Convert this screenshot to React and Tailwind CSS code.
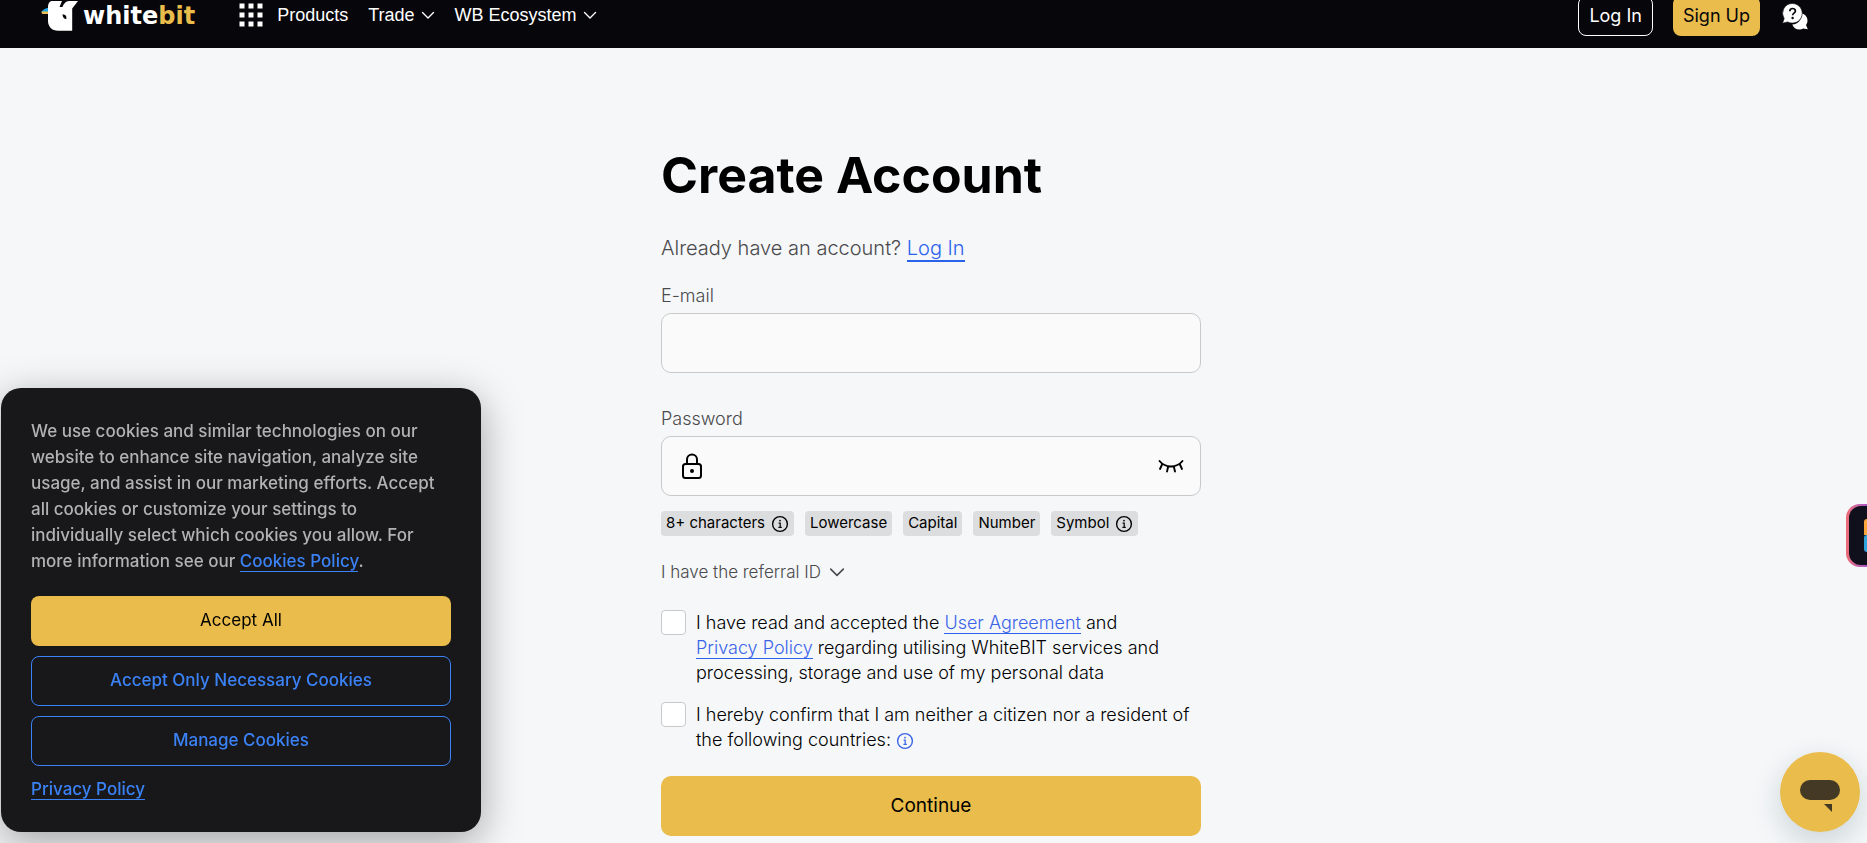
import { useState } from 'react';

const NAV_ITEMS = ['Trade', 'WB Ecosystem'];

const PASSWORD_RULES = [
  { label: '8+ characters', info: true },
  { label: 'Lowercase' },
  { label: 'Capital' },
  { label: 'Number' },
  { label: 'Symbol', info: true }
];

function ChevronIcon({ className }) {
  return (
    <svg className={className} viewBox="0 0 14 14" fill="none" stroke="currentColor" strokeWidth="1.4" strokeLinecap="round" strokeLinejoin="round">
      <path d="M1.500 4.500l5.500 5.500 5.500-5.500" />
    </svg>
  );
}

function InfoIcon({ className }) {
  return (
    <svg className={className} viewBox="0 0 18 18" fill="none" stroke="currentColor" strokeWidth="1.4">
      <circle cx="9" cy="9" r="7.4" />
      <path d="M7.600 8.200h1.600v4M7.400 12.400h3.400" strokeWidth="1.200" />
      <circle cx="9" cy="5.600" r="0.900" fill="currentColor" stroke="none" />
    </svg>
  );
}

function Logo() {
  return (
    <a href="#home" className="flex items-center gap-1" aria-label="whitebit">
      <svg className="h-[30px] w-[38px]" viewBox="0 0 38 30">
        <path d="M8 6.500C4 7 1.500 9 0.500 11H8z" fill="#1fa2e8" />
        <path d="M0.500 10.500H8V13H1.800C1 13 0.400 12 0.500 10.500z" fill="#ebbd4c" />
        <path
          d="M10.500 0H21L18.500 6H21.500C22.500 3 25 0 28 0H37L31.200 7.500V29.800H17C11 29.800 7 25.500 7 20V6C7 3 8 0.800 10.500 0z"
          fill="#fff"
        />
        <path d="M21.500 13.200l2 .6c1.200.4 1.800 1.200 1.800 2.400v2c-2.200-.4-3.800-2-3.800-5z" fill="#07060b" />
      </svg>
      <span className="font-['DejaVu_Sans',sans-serif] text-2xl leading-8 font-bold text-white">
        white<span className="text-[#e9bc4b]">bit</span>
      </span>
    </a>
  );
}

function Header() {
  return (
    <header className="-mt-4 flex h-16 items-center justify-between bg-[#07060b] pr-[58px] pl-[41px] text-white">
      <div className="flex items-center">
        <Logo />
        <nav className="ml-11 flex items-center gap-5 pb-0.5 font-['Liberation_Sans',Arial,sans-serif] text-lg leading-8">
          <button type="button" className="flex items-center gap-3.5">
            <svg className="size-6" viewBox="0 0 24 24" fill="currentColor">
              {[0.5, 9.5, 18.5].map((y) =>
                [0.5, 9.5, 18.5].map((x) => <rect key={`${x}-${y}`} x={x} y={y} width="5" height="5" />)
              )}
            </svg>
            Products
          </button>
          {NAV_ITEMS.map((item) => (
            <button key={item} type="button" className="flex items-center gap-1.5">
              {item}
              <ChevronIcon className="size-3.5" />
            </button>
          ))}
        </nav>
      </div>

      <div className="flex items-center gap-5 text-lg">
        <a href="#login" className="flex h-10 items-center rounded-lg border border-white px-2.5">
          Log In
        </a>
        <a href="#signup" className="flex h-10 items-center rounded-lg bg-[#e9bc4b] px-2.5 text-[#07060b]">
          Sign Up
        </a>
        <button type="button" aria-label="Help">
          <svg className="ml-0.5 size-[27px]" viewBox="0 0 27 27">
            <path d="M20 10.500c3.500 1 5.500 4 5.500 7 0 1.800-.6 3.200-1.500 4.500l1.800 4.200-4.600-.6c-1 .6-2.200.9-3.700.9-3.500 0-6.300-2-7.200-5 5.200 0 9.700-4.600 9.700-11z" fill="#fff" />
            <path d="M10.500 0.500a9.800 9.800 0 1 1-4.800 18.400L0.500 20.200l1.700-4.600A9.800 9.800 0 0 1 10.500 0.500z" fill="#fff" stroke="#07060b" strokeWidth="0.600" />
            <path d="M7.800 8.200c0-3.700 5.600-3.500 5.600-.2 0 2.100-2.800 2.200-2.800 4.300" fill="none" stroke="#07060b" strokeWidth="1.700" />
            <circle cx="10.600" cy="15" r="1.200" fill="#07060b" />
          </svg>
        </button>
      </div>
    </header>
  );
}

function FormLink({ href, children }) {
  return (
    <a href={href} className="border-b border-[#2b62eb] text-[#3a63e8]">
      {children}
    </a>
  );
}

function Agreement({ id, children }) {
  const [checked, setChecked] = useState(false);

  return (
    <div className="flex gap-2.5">
      <input
        id={id}
        type="checkbox"
        checked={checked}
        onChange={(e) => setChecked(e.target.checked)}
        className="size-[25px] shrink-0 appearance-none rounded border border-[#c8c9cb] bg-white checked:bg-[#e9bc4b]"
      />
      <label htmlFor={id} className="text-lg leading-[25px] font-light text-black">
        {children}
      </label>
    </div>
  );
}

function SignUpForm() {
  const [showPassword, setShowPassword] = useState(false);

  return (
    <form className="w-full max-w-[540px]" onSubmit={(e) => e.preventDefault()}>
      <h1 className="text-[50px] leading-[60px] font-bold text-black">Create Account</h1>
      <p className="mt-7 text-xl leading-[30px] font-light text-[#4a4a4c]">
        Already have an account?{' '}
        <a href="#login" className="border-b-2 border-[#2b62eb] text-[#2b62eb]">
          Log In
        </a>
      </p>

      {/* E-mail */}
      <label htmlFor="email" className="mt-[21px] block text-lg leading-6 font-light text-[#4a4a4c]">
        E-mail
      </label>
      <input
        id="email"
        type="email"
        className="mt-[5px] block h-[60px] w-full rounded-[10px] border border-[#c8c9cb] bg-[#fafafa] px-5"
      />

      {/* Password */}
      <label htmlFor="password" className="mt-[34px] block text-lg leading-6 font-light text-[#4a4a4c]">
        Password
      </label>
      <div className="mt-[5px] flex h-[60px] items-center gap-3 rounded-[10px] border border-[#c8c9cb] bg-[#fafafa] pr-4 pl-[18px]">
        <svg className="h-[26px] w-6 shrink-0" viewBox="0 0 24 26" fill="none" stroke="#000" strokeWidth="2">
          <rect x="3" y="11" width="18" height="14" rx="2.500" />
          <path d="M7 11V6.500a5 5 0 0 1 10 0V11" />
          <circle cx="12" cy="18" r="2" fill="#000" stroke="none" />
        </svg>
        <input
          id="password"
          type={showPassword ? 'text' : 'password'}
          className="h-full min-w-0 flex-1 bg-transparent outline-none"
        />
        <button type="button" aria-label="Toggle password visibility" onClick={() => setShowPassword(!showPassword)}>
          <svg className="h-4 w-[26px]" viewBox="0 0 26 16" fill="none" stroke="#000" strokeWidth="1.900" strokeLinecap="round">
            <path d="M1.500 3c6 7.300 17 7.300 23 0M4.300 6L2 11M10.200 8.500L9 13.500M15.800 8.500l1.200 5M21.700 6L24 11" />
          </svg>
        </button>
      </div>

      <ul className="mt-[15px] flex gap-[11px]">
        {PASSWORD_RULES.map((rule) => (
          <li key={rule.label} className="flex h-[25px] items-center gap-1.5 rounded bg-[#dcddde] px-[5px] text-[15px] text-black">
            {rule.label}
            {rule.info && <InfoIcon className="size-[18px]" />}
          </li>
        ))}
      </ul>

      <button type="button" className="mt-6 flex items-center gap-2 text-[17px] leading-6 font-light text-[#4a4a4c]">
        I have the referral ID
        <ChevronIcon className="size-4" />
      </button>

      <div className="mt-[26px] flex flex-col gap-[17px]">
        <Agreement id="terms">
          I have read and accepted the <FormLink href="#agreement">User Agreement</FormLink> and
          <br />
          <FormLink href="#privacy">Privacy Policy</FormLink> regarding utilising WhiteBIT services and processing,
          storage and use of my personal data
        </Agreement>
        <Agreement id="residency">
          I hereby confirm that I am neither a citizen nor a resident of the following countries:{' '}
          <InfoIcon className="inline size-[18px] align-[-4px] text-[#3a63e8]" />
        </Agreement>
      </div>

      <button type="submit" className="mt-6 h-[60px] w-full rounded-[10px] bg-[#e9bc4b] text-[19px] text-black">
        Continue
      </button>
    </form>
  );
}

function CookieBanner() {
  return (
    <aside className="fixed bottom-[11px] left-px w-[480px] rounded-[20px] bg-[#18181a] px-[30px] py-[30px] text-[17px] font-medium shadow-[0_10px_40px_rgba(0,0,0,0.35)]">
      <p className="leading-[26px] text-[#b2b2b4]">
        We use cookies and similar technologies on our website to enhance site navigation, analyze site usage, and
        assist in our marketing efforts. Accept all cookies or customize your settings to individually select which
        cookies you allow. For more information see our{' '}
        <a href="#cookies" className="border-b border-[#3b82f6] text-[#3b82f6]">
          Cookies Policy
        </a>
        .
      </p>
      <div className="mt-[22px] flex flex-col gap-2.5">
        <button type="button" className="h-[50px] rounded-lg bg-[#e9bc4b] font-normal text-black">
          Accept All
        </button>
        <button type="button" className="h-[50px] rounded-lg border border-[#3b82f6] text-[#3b82f6]">
          Accept Only Necessary Cookies
        </button>
        <button type="button" className="h-[50px] rounded-lg border border-[#3b82f6] text-[#3b82f6]">
          Manage Cookies
        </button>
      </div>
      <p className="mt-2.5 leading-[26px]">
        <a href="#privacy" className="border-b border-[#3b82f6] text-[#3b82f6]">
          Privacy Policy
        </a>
      </p>
    </aside>
  );
}

function App() {
  return (
    <div className="min-h-screen overflow-hidden bg-[#f5f7f9] font-[Inter,sans-serif]">
      <Header />
      <main className="flex justify-center pt-[97px] pr-[5px]">
        <SignUpForm />
      </main>

      <CookieBanner />

      {/* Side tab */}
      <button
        type="button"
        aria-label="Open side panel"
        className="fixed top-[504px] right-0 h-[63px] w-[21px] rounded-l-[14px] bg-gradient-to-r from-[#ef6c72] to-[#a855c7] py-0.5 pl-[3px]"
      >
        <span className="flex h-full flex-col items-end justify-center rounded-l-xl bg-[#10101c]">
          <span className="h-4 w-[3px] rounded-tl-sm bg-[#fba63c]" />
          <span className="h-[17px] w-[3px] rounded-l-sm bg-[#2fa4dc]" />
        </span>
      </button>

      {/* Chat launcher */}
      <button
        type="button"
        aria-label="Open chat"
        className="fixed right-[7px] bottom-[11px] size-20 rounded-full bg-[#e9bc4b] shadow-[0_10px_30px_rgba(0,50,60,0.18)]"
      >
        <svg className="size-20" viewBox="0 0 80 80" fill="#433924">
          <rect x="20" y="28" width="40" height="20" rx="10" />
          <path d="M44 52h8v8z" />
        </svg>
      </button>
    </div>
  );
}

export default App;
